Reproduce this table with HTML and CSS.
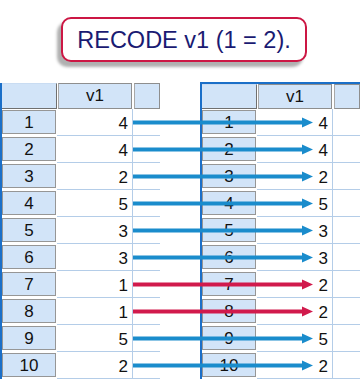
FILE: index.html
```html
<!DOCTYPE html>
<html>
<head>
<meta charset="utf-8">
<link rel="stylesheet" href="styles.css">
</head>
<body>
<div class="title-wrap"><div class="title">RECODE v1 (1 = 2).</div></div>
<div class="stage">
  <div class="grid left">
    <div class="hrow"><div class="corner"></div><div class="hcell v">v1</div><div class="hcell extra"></div></div>
    <div class="row"><div class="rh"><div class="box">1</div></div><div class="val">4</div><div class="empty"></div></div>
    <div class="row"><div class="rh"><div class="box">2</div></div><div class="val">4</div><div class="empty"></div></div>
    <div class="row"><div class="rh"><div class="box">3</div></div><div class="val">2</div><div class="empty"></div></div>
    <div class="row"><div class="rh"><div class="box">4</div></div><div class="val">5</div><div class="empty"></div></div>
    <div class="row"><div class="rh"><div class="box">5</div></div><div class="val">3</div><div class="empty"></div></div>
    <div class="row"><div class="rh"><div class="box">6</div></div><div class="val">3</div><div class="empty"></div></div>
    <div class="row"><div class="rh"><div class="box">7</div></div><div class="val">1</div><div class="empty"></div></div>
    <div class="row"><div class="rh"><div class="box">8</div></div><div class="val">1</div><div class="empty"></div></div>
    <div class="row"><div class="rh"><div class="box">9</div></div><div class="val">5</div><div class="empty"></div></div>
    <div class="row"><div class="rh"><div class="box">10</div></div><div class="val">2</div><div class="empty"></div></div>
  </div>
  <div class="grid right">
    <div class="hrow"><div class="corner"></div><div class="hcell v">v1</div><div class="hcell extra"></div></div>
    <div class="row"><div class="rh"><div class="box">1</div></div><div class="val">4</div><div class="empty"></div></div>
    <div class="row"><div class="rh"><div class="box">2</div></div><div class="val">4</div><div class="empty"></div></div>
    <div class="row"><div class="rh"><div class="box">3</div></div><div class="val">2</div><div class="empty"></div></div>
    <div class="row"><div class="rh"><div class="box">4</div></div><div class="val">5</div><div class="empty"></div></div>
    <div class="row"><div class="rh"><div class="box">5</div></div><div class="val">3</div><div class="empty"></div></div>
    <div class="row"><div class="rh"><div class="box">6</div></div><div class="val">3</div><div class="empty"></div></div>
    <div class="row"><div class="rh"><div class="box">7</div></div><div class="val">2</div><div class="empty"></div></div>
    <div class="row"><div class="rh"><div class="box">8</div></div><div class="val">2</div><div class="empty"></div></div>
    <div class="row"><div class="rh"><div class="box">9</div></div><div class="val">5</div><div class="empty"></div></div>
    <div class="row"><div class="rh"><div class="box">10</div></div><div class="val">2</div><div class="empty"></div></div>
  </div>
  <svg class="arrows" width="360" height="298" viewBox="0 0 360 298">
    <g class="blue">
      <rect x="133" y="38.5" width="170" height="4"/><polygon points="302,35.5 313,40.5 302,45.5"/>
      <rect x="133" y="65.5" width="170" height="4"/><polygon points="302,62.5 313,67.5 302,72.5"/>
      <rect x="133" y="92.5" width="170" height="4"/><polygon points="302,89.5 313,94.5 302,99.5"/>
      <rect x="133" y="119.5" width="170" height="4"/><polygon points="302,116.5 313,121.5 302,126.5"/>
      <rect x="133" y="146.5" width="170" height="4"/><polygon points="302,143.5 313,148.5 302,153.5"/>
      <rect x="133" y="173.5" width="170" height="4"/><polygon points="302,170.5 313,175.5 302,180.5"/>
      <rect x="133" y="254.5" width="170" height="4"/><polygon points="302,251.5 313,256.5 302,261.5"/>
      <rect x="133" y="281.5" width="170" height="4"/><polygon points="302,278.5 313,283.5 302,288.5"/>
    </g>
    <g class="red">
      <rect x="133" y="200.5" width="170" height="4"/><polygon points="302,197.5 313,202.5 302,207.5"/>
      <rect x="133" y="227.5" width="170" height="4"/><polygon points="302,224.5 313,229.5 302,234.5"/>
    </g>
  </svg>
</div>
</body>
</html>
```

FILE: styles.css
```css
html, body {
  margin: 0;
  padding: 0;
  background: #ffffff;
  width: 360px;
  height: 380px;
  overflow: hidden;
  font-family: "Liberation Sans", Arial, sans-serif;
}

.title-wrap {
  height: 82px;
  padding-top: 17px;
  padding-left: 61px;
  box-sizing: border-box;
}

.title {
  width: 246px;
  height: 45px;
  box-sizing: border-box;
  border: 2px solid #cc1744;
  border-radius: 10px;
  background: #ffffff;
  box-shadow: -4px 5px 3px #b0b0b0;
  color: #1a1a72;
  font-size: 23.5px;
  display: flex;
  align-items: center;
  justify-content: center;
  padding-top: 1px;
}

.stage {
  position: relative;
  display: flex;
  gap: 40px;
  align-items: flex-start;
}

.grid {
  width: 160px;
  box-sizing: border-box;
  border-left: 2px solid #1b6fc8;
  display: flex;
  flex-direction: column;
}

.grid.left {
  margin-top: 1px;
}

.grid.right {
  border-top: 2px solid #1b6fc8;
}

.hrow {
  display: flex;
  height: 26px;
  background: #ffffff;
}

.grid.right .hrow {
  height: 25px;
}

.corner {
  width: 55px;
  box-sizing: border-box;
  background: #d2e4f8;
  border-top: 1px solid #c9dcf2;
  border-right: 1px solid #707070;
  border-bottom: 1px solid #707070;
}

.hcell {
  box-sizing: border-box;
  background: #d2e4f8;
  border: 1px solid #8e8e8e;
  border-left-color: #a8a8a8;
  margin-left: 1px;
  font-size: 17px;
  color: #111111;
  display: flex;
  align-items: center;
  justify-content: center;
}

.hcell.v {
  width: 74px;
}

.hcell.extra {
  flex: 1;
  margin-left: 2px;
}

.row {
  display: flex;
  height: 27px;
}

.rh {
  width: 55px;
  box-sizing: border-box;
  padding: 1px 1px 2px 0;
}

.box {
  height: 100%;
  box-sizing: border-box;
  background: #d2e4f8;
  border: 1px solid #969696;
  font-size: 17px;
  color: #111111;
  display: flex;
  align-items: center;
  justify-content: center;
  padding-top: 1px;
}

.val {
  width: 76px;
  box-sizing: border-box;
  border-right: 1px solid #b4cde8;
  border-bottom: 1px solid #b4cde8;
  font-size: 17px;
  color: #111111;
  text-align: right;
  padding-right: 4px;
  line-height: 27px;
  padding-top: 1px;
}

.empty {
  flex: 1;
  border-bottom: 1px solid #b4cde8;
}

.arrows {
  position: absolute;
  left: 0;
  top: 0;
}

.blue rect, .blue polygon {
  fill: #1a8ccc;
}

.red rect, .red polygon {
  fill: #d11a4c;
}
```
